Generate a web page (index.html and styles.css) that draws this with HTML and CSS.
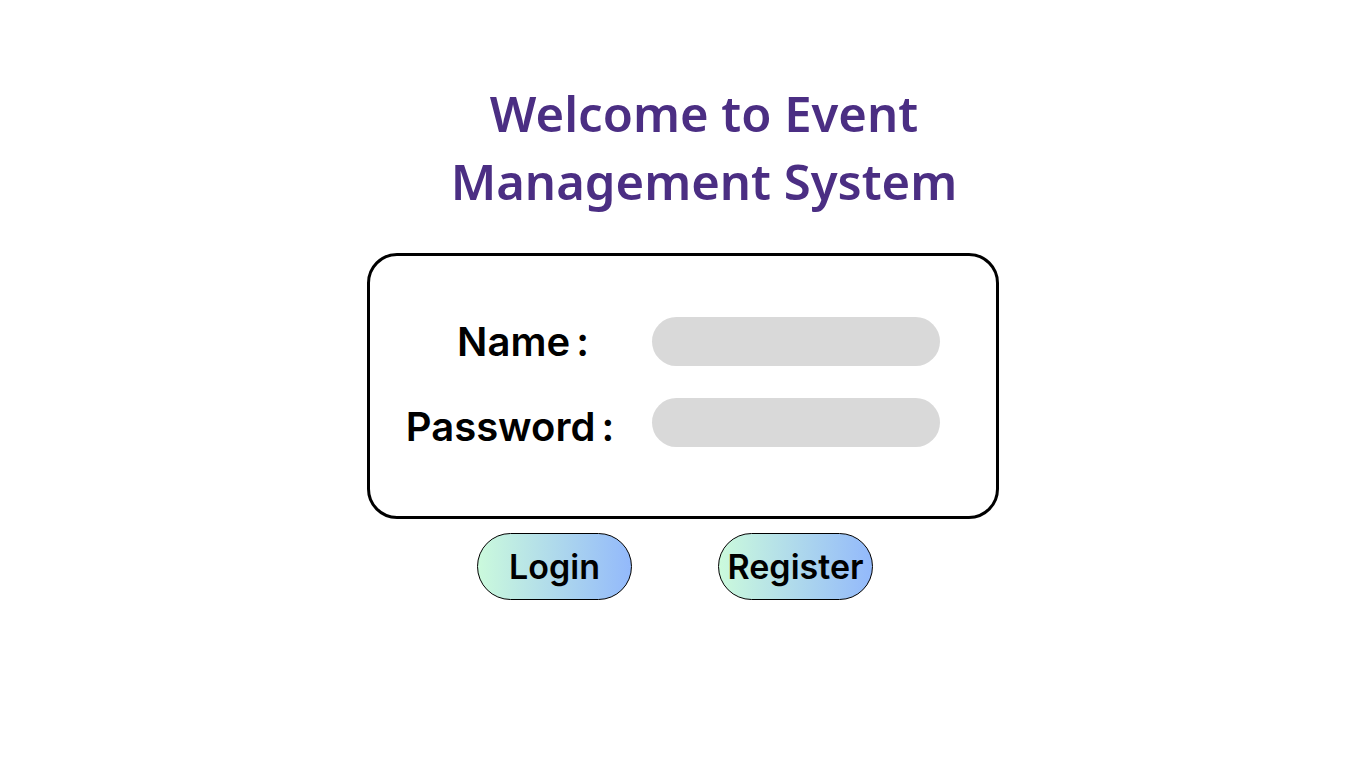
FILE: index.html
```html
<!DOCTYPE html>
<html lang="en">
<head>
<meta charset="utf-8">
<title>Event Management System</title>
<link rel="stylesheet" href="styles.css">
</head>
<body>
<main class="page">
  <h1 class="title">Welcome to Event<br>Management System</h1>
  <form class="card">
    <label class="label label-name" for="name">Name :</label>
    <input class="field" id="name" type="text">
    <label class="label label-pass" for="password">Password :</label>
    <input class="field" id="password" type="password">
  </form>
  <div class="actions">
    <button class="btn" type="button">Login</button>
    <button class="btn" type="button">Register</button>
  </div>
</main>
</body>
</html>
```

FILE: styles.css
```css
* { box-sizing: border-box; }
html, body { margin: 0; padding: 0; background: #ffffff; }
body { font-family: "Inter", "Liberation Sans", sans-serif; color: #000; }

.page {
  display: flex;
  flex-direction: column;
  align-items: center;
  padding-top: 79px;
}

.title {
  margin: 0 0 38px 42px;
  font-family: "Noto Sans", "Liberation Sans", sans-serif;
  font-weight: 600;
  font-size: 49px;
  line-height: 68px;
  text-align: center;
  color: #4b2e83;
}

.card {
  width: 632px;
  height: 266px;
  border: 3px solid #000;
  border-radius: 30px;
  margin: 0;
  padding: 61px 56px 0 0;
  display: grid;
  grid-template-columns: 282px 288px;
  grid-auto-rows: 49px;
  row-gap: 32px;
  align-items: center;
}

.label {
  justify-self: center;
  font-size: 40px;
  font-weight: 600;
  line-height: 1;
  word-spacing: -4px;
}
.label-name { padding-left: 24px; }
.label-pass { margin-top: 8px; margin-left: -2px; }

.field {
  width: 288px;
  height: 49px;
  border: none;
  border-radius: 25px;
  background: #d9d9d9;
  outline: none;
  padding: 0 20px;
}

.actions {
  display: flex;
  gap: 86px;
  margin-top: 14px;
  margin-right: 16px;
}

.btn {
  width: 155px;
  height: 67px;
  border: 1px solid #000;
  border-radius: 34px;
  background: linear-gradient(90deg, #cbfadc 0%, #93b9fb 100%);
  font-family: "Inter", "Liberation Sans", sans-serif;
  font-size: 34px;
  font-weight: 600;
  color: #000;
  padding: 0;
  cursor: pointer;
}
```
